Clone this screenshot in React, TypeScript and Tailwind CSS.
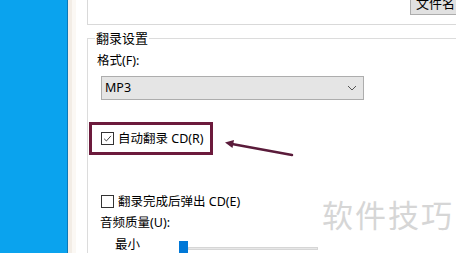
import React from "react";

const font = { fontFamily: '"Noto Sans", "Noto Sans CJK SC", sans-serif' };

function CheckBox({ checked }: { checked?: boolean }) {
  return (
    <span className="flex h-[13px] w-[13px] shrink-0 items-center justify-center border border-[#333] bg-white">
      {checked && (
        <svg viewBox="0 0 13 13" className="h-[13px] w-[13px]">
          <path d="M2.5 6.8 L5.2 9.4 L10.6 3.4" fill="none" stroke="#333" strokeWidth="1.1" />
        </svg>
      )}
    </span>
  );
}

export default function App() {
  return (
    <div
      className="relative flex h-[253px] w-[456px] overflow-hidden bg-white text-[12.5px] leading-[16px] text-black"
      style={font}
    >
      <div className="w-[67px] shrink-0 bg-[#0aa3ee]" />
      <div className="w-[1px] shrink-0 bg-[#0a78b8]" />
      <div className="w-[4px] shrink-0 bg-[#f3ede6]" />
      <div className="w-[4px] shrink-0 bg-[#fbf8f4]" />

      <div className="flex min-w-0 flex-1 flex-col pl-[11px]">
        {/* top pane */}
        <div className="flex h-[25px] shrink-0 justify-end border-b border-l border-[#d9d9d9]">
          <div className="-mr-[14px] -mt-[8px] h-[23px] w-[60px] shrink-0 whitespace-nowrap border border-[#adadad] bg-[#e1e1e1] pl-[5px] pt-[2px] text-[13px]">
            文件名
          </div>
        </div>

        {/* group box */}
        <fieldset className="mt-[6px] flex-1 border-l border-t border-[#dcdcdc]">
          <legend className="ml-[7px] px-[1px] text-[13px] leading-[14px]">翻录设置</legend>
          <div className="flex flex-col pl-[9px]">
            <div className="mt-[8px] h-[16px]">格式(F):</div>
            <div className="ml-[4px] mt-[7px] flex h-[24px] w-[263px] items-center justify-between border border-[#adadad] bg-[#e5e5e5] pl-[3px] pr-[6px]">
              <span>MP3</span>
              <svg viewBox="0 0 10 6" className="h-[6px] w-[10px]">
                <path d="M1 1 L5 5 L9 1" fill="none" stroke="#555" strokeWidth="1" />
              </svg>
            </div>
            <div className="-ml-[8px] mt-[22px] flex h-[33px] w-[124px] items-center gap-[4px] border-[3px] border-[#6c1a3c] pl-[9px]">
              <CheckBox checked />
              <span>自动翻录 CD(R)</span>
            </div>
            <div className="ml-[4px] mt-[39px] flex h-[15px] items-center gap-[4px]">
              <CheckBox />
              <span className="whitespace-nowrap">翻录完成后弹出 CD(E)</span>
            </div>
            <div className="ml-[3px] mt-[6px] h-[16px]">音频质量(U):</div>
            <div className="ml-[18px] mt-[6px] flex h-[16px] items-start">
              <span>最小</span>
              <div className="ml-[39px] mt-[4px] h-[14px] w-[9px] bg-[#0078d7]" />
              <div className="mt-[10px] h-[3px] w-[130px] border border-[#d6d6d6] bg-[#e7e7e7]" />
            </div>
          </div>
        </fieldset>
      </div>

      {/* annotation arrow */}
      <svg className="absolute left-0 top-0" width="456" height="253" viewBox="0 0 456 253">
        <line x1="292" y1="155" x2="232" y2="144" stroke="#5a1b3a" strokeWidth="2.5" strokeLinecap="round" />
        <path d="M225 142.6 L234 140 L232.5 148 Z" fill="#5a1b3a" />
      </svg>

      {/* watermark */}
      <div className="absolute left-[322px] top-[196px] text-[31px] leading-[36px] tracking-[2px] text-[#d6d6d6]" style={{ fontFamily: '"Noto Sans CJK SC", sans-serif' }}>
        软件技巧
      </div>
    </div>
  );
}
